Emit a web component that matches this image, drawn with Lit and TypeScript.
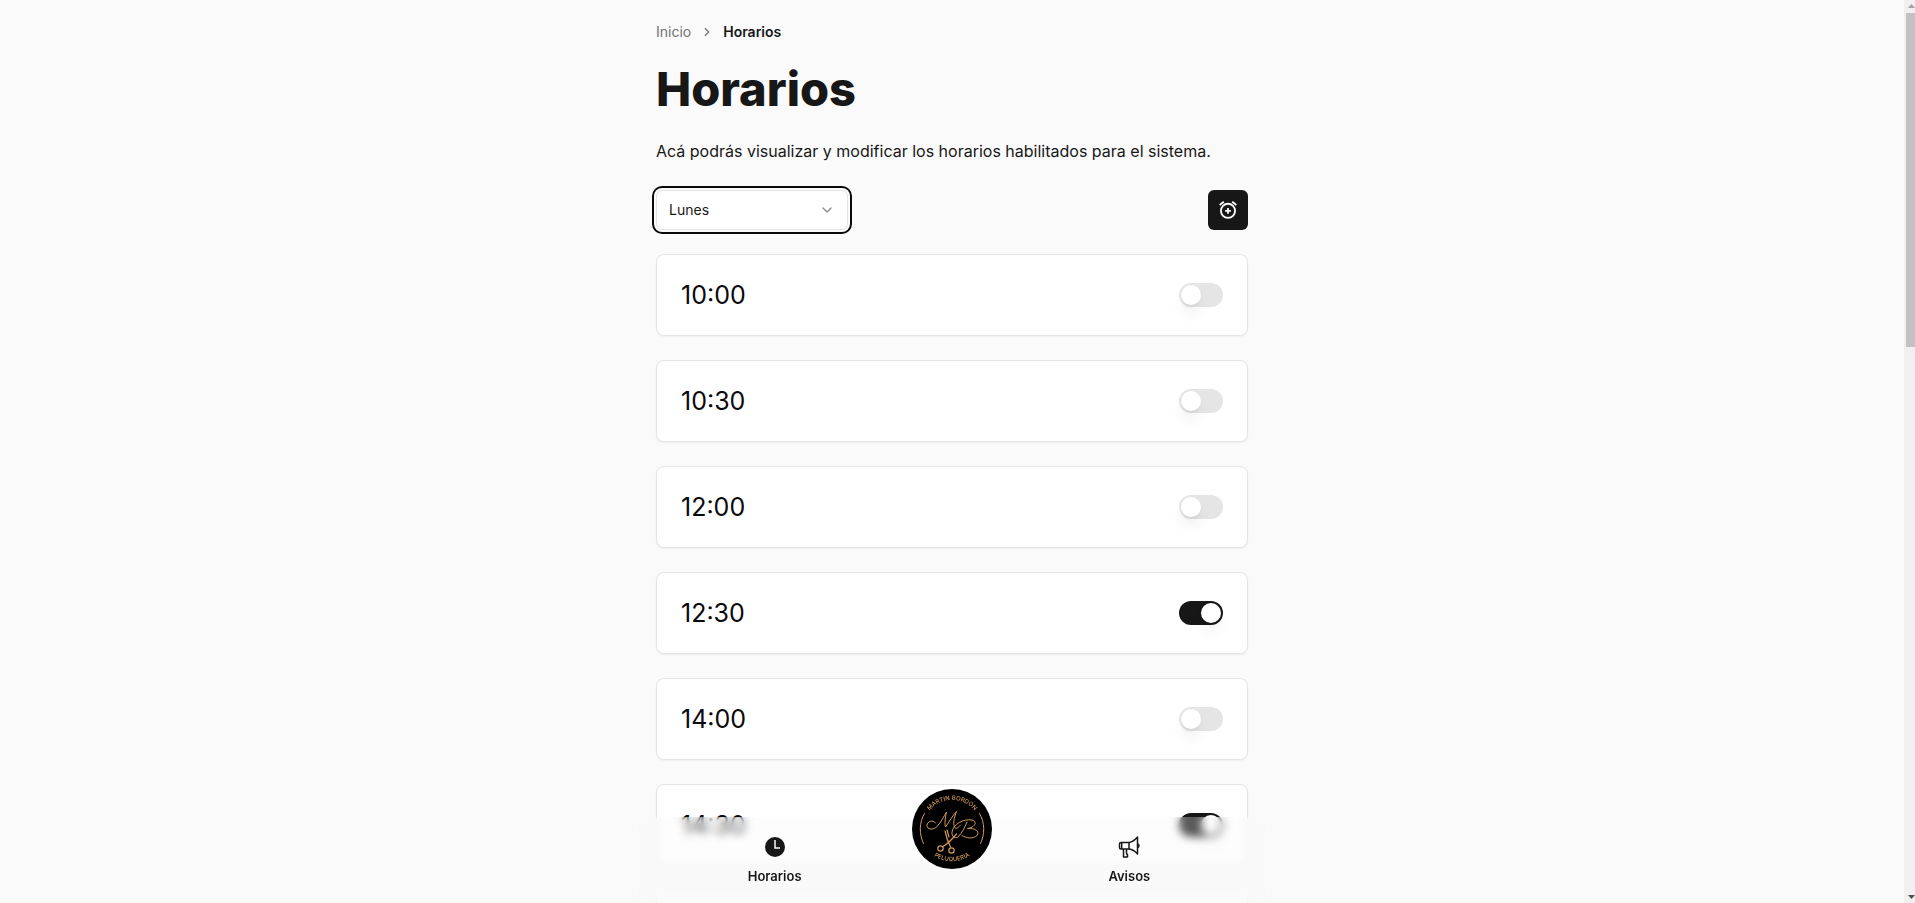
import { LitElement, html, css, svg } from "lit";
import { customElement, property, state } from "lit/decorators.js";

interface Slot {
  time: string;
  enabled: boolean;
}

const DAYS = ["Lunes", "Martes", "Miércoles", "Jueves", "Viernes", "Sábado"];

const SLOTS: Slot[] = [
  { time: "10:00", enabled: false },
  { time: "10:30", enabled: false },
  { time: "12:00", enabled: false },
  { time: "12:30", enabled: true },
  { time: "14:00", enabled: false },
  { time: "14:30", enabled: true },
  { time: "15:00", enabled: false },
];

@customElement("slot-card")
export class SlotCard extends LitElement {
  @property() time = "";
  @property({ type: Boolean }) enabled = false;

  static styles = css`
    :host {
      display: block;
    }
    .card {
      display: flex;
      align-items: center;
      justify-content: space-between;
      padding: 24px;
      background: #fff;
      border: 1px solid #e5e5e5;
      border-radius: 8px;
      box-shadow: 0 1px 2px rgba(0, 0, 0, 0.05);
    }
    .time {
      font-size: 25px;
      line-height: 32px;
      color: #0a0a0a;
    }
    .switch {
      appearance: none;
      box-sizing: border-box;
      display: flex;
      width: 44px;
      height: 24px;
      margin: 0;
      padding: 2px;
      border-radius: 12px;
      background: #e5e5e5;
      cursor: pointer;
    }
    .switch::before {
      content: "";
      width: 20px;
      height: 20px;
      border-radius: 50%;
      background: #fff;
      box-shadow: 0 10px 15px -3px rgba(0, 0, 0, 0.1),
        0 4px 6px -4px rgba(0, 0, 0, 0.1);
    }
    .switch:checked {
      background: #171717;
      justify-content: flex-end;
    }
  `;

  render() {
    return html`
      <div class="card">
        <label class="time" for="toggle">${this.time}</label>
        <input
          class="switch"
          id="toggle"
          type="checkbox"
          role="switch"
          .checked=${this.enabled}
        />
      </div>
    `;
  }
}

@customElement("brand-logo")
export class BrandLogo extends LitElement {
  static styles = css`
    :host {
      display: block;
    }
    .logo {
      display: block;
      width: 80px;
      height: 80px;
    }
    .ring {
      font: 500 6px Inter, sans-serif;
      fill: #d39a5c;
    }
  `;

  render() {
    return html`
      <svg class="logo" viewBox="0 0 80 80" role="img" aria-label="Martín Bordón Peluquería">
        ${svg`
          <defs>
            <path id="top" d="M13.6 27.8A29 29 0 0 1 66.4 27.8" />
            <path id="bottom" d="M14 59.5A33 33 0 0 0 66 59.5" />
          </defs>
          <circle cx="40" cy="40" r="40" fill="#000" />
          <text class="ring" text-anchor="middle"><textPath href="#top" startOffset="50%">MARTIN BORDON</textPath></text>
          <text class="ring" text-anchor="middle"><textPath href="#bottom" startOffset="50%">PELUQUERIA</textPath></text>
          <g fill="none" stroke="#d39a5c" stroke-linecap="round" stroke-linejoin="round">
            <path stroke-width="1" d="M12.500 24.500C7 33.500 7 45 11.500 54.500M67.500 24.500C73 33.500 73 45 68.500 54.500" />
            <path stroke-width="1" d="M23.500 34C21 30 15 32.500 15 36.500C15 40.500 21 41.500 25 37.500C29 33.500 32 27 34.500 23C33 30 32.500 35 33.500 38C37 33 41 26 44.500 22.500C42 29 41 34 42.500 38C43.500 40.500 46 39 48 36.500" />
            <path stroke-width="1" d="M55 33C53 38 50 44 46 48C43 50 39.500 47.500 40 43C41 35 52 29.500 60 31C66 32.500 63 38.500 55.500 39.500C63 39 68 42 65 46.500C61 50.500 54 49 50 46.500" />
            <path stroke-width="1.200" d="M33 42C34.500 49 37 55 38.500 58M44.500 45C40 50.500 35 55 31 57.500M35 41L37 48" />
            <circle cx="28.500" cy="59.500" r="2.700" stroke-width="1.200" />
            <circle cx="39.500" cy="61.500" r="2.700" stroke-width="1.200" />
          </g>
        `}
      </svg>
    `;
  }
}

@customElement("app-root")
export class AppRoot extends LitElement {
  @state() private slots = SLOTS;

  static styles = css`
    :host {
      display: grid;
      grid-template-columns: minmax(0, 1fr) 11px;
      height: 100vh;
      background: #fafafa;
      color: #171717;
      font-family: Inter, "Noto Sans", sans-serif;
    }
    .viewport {
      overflow-y: auto;
      scrollbar-width: none;
    }
    .page {
      box-sizing: border-box;
      max-width: 640px;
      margin: 0 auto;
      padding: 20px 24px 112px;
      display: flex;
      flex-direction: column;
    }
    .crumbs {
      display: flex;
      align-items: center;
      gap: 9px;
      font-size: 14px;
      line-height: 24px;
    }
    .crumbs a {
      color: #737373;
      text-decoration: none;
    }
    .crumbs svg {
      width: 14px;
      height: 14px;
      color: #737373;
    }
    .current {
      font-weight: 600;
    }
    h1 {
      margin: 20px 0 0;
      font-size: 47px;
      line-height: 50px;
      font-weight: 800;
    }
    .intro {
      margin: 24px 0 0;
      font-size: 16px;
      line-height: 26px;
    }
    .toolbar {
      display: flex;
      justify-content: space-between;
      margin: 26px 0 24px;
    }
    .picker {
      display: grid;
      width: 192px;
    }
    .picker select,
    .picker svg {
      grid-area: 1 / 1;
    }
    .picker select {
      appearance: none;
      box-sizing: border-box;
      height: 40px;
      padding: 0 12px;
      border: 1px solid #e5e5e5;
      border-radius: 6px;
      background: #fff;
      color: #171717;
      font: 14px/20px Inter, "Noto Sans", sans-serif;
      outline: none;
      box-shadow: 0 0 0 2px #fafafa, 0 0 0 4px #0a0a0a;
    }
    .picker svg {
      width: 16px;
      height: 16px;
      margin-right: 13px;
      place-self: center end;
      opacity: 0.5;
      pointer-events: none;
    }
    .add {
      display: grid;
      place-items: center;
      width: 40px;
      height: 40px;
      padding: 0;
      border: 0;
      border-radius: 6px;
      background: #171717;
      color: #fafafa;
      cursor: pointer;
    }
    .add svg {
      width: 20px;
      height: 20px;
    }
    .slots {
      display: grid;
      gap: 24px;
      margin: 0;
      padding: 0;
      list-style: none;
    }
    .dock {
      position: fixed;
      inset: auto 11px 0 0;
      box-sizing: border-box;
      max-width: 640px;
      height: 86px;
      margin: 0 auto;
      padding: 0 54px;
      display: grid;
      grid-template-columns: repeat(3, 1fr);
      grid-template-rows: 100%;
      justify-items: center;
      align-items: end;
      background: rgba(247, 247, 247, 0.3);
      backdrop-filter: blur(4px);
    }
    .tab {
      display: flex;
      flex-direction: column;
      align-items: center;
      gap: 8px;
      padding-bottom: 17px;
      color: #171717;
      font-size: 13px;
      line-height: 20px;
      font-weight: 600;
      text-decoration: none;
    }
    .tab svg {
      width: 22px;
      height: 22px;
    }
    .home {
      padding-bottom: 34px;
    }
    .scrollbar {
      display: flex;
      flex-direction: column;
      align-items: flex-end;
      background: #f0f0f0;
    }
    .scrollbar svg {
      width: 9px;
      height: 13px;
    }
    .thumb {
      width: 9px;
      height: 37%;
      background: #c1c1c1;
    }
    .down {
      margin-top: auto;
    }
  `;

  render() {
    return html`
      <div class="viewport">
        <main class="page">
          <nav class="crumbs" aria-label="Ruta">
            <a href="#inicio">Inicio</a>
            <svg viewBox="0 0 24 24" fill="none" stroke="currentColor" stroke-width="2" stroke-linecap="round" stroke-linejoin="round"><path d="m9 18 6-6-6-6" /></svg>
            <span class="current" aria-current="page">Horarios</span>
          </nav>
          <h1>Horarios</h1>
          <p class="intro">Acá podrás visualizar y modificar los horarios habilitados para el sistema.</p>
          <div class="toolbar">
            <div class="picker">
              <select aria-label="Día">
                ${DAYS.map((day) => html`<option>${day}</option>`)}
              </select>
              <svg viewBox="0 0 24 24" fill="none" stroke="currentColor" stroke-width="2" stroke-linecap="round" stroke-linejoin="round"><path d="m6 9 6 6 6-6" /></svg>
            </div>
            <button class="add" type="button" aria-label="Agregar horario">
              <svg viewBox="0 0 24 24" fill="none" stroke="currentColor" stroke-width="2.200">
                <circle cx="12" cy="13" r="8.500" />
                <path d="M7 2 2 6M17 2l5 4M12 9.500v7M8.500 13h7" />
              </svg>
            </button>
          </div>
          <ul class="slots">
            ${this.slots.map(
              (s) => html`<li><slot-card .time=${s.time} .enabled=${s.enabled}></slot-card></li>`
            )}
          </ul>
        </main>
      </div>
      <div class="scrollbar" aria-hidden="true">
        <svg viewBox="0 0 9 13"><path d="M2 8h7L5.500 4z" fill="#a3a3a3" /></svg>
        <div class="thumb"></div>
        <svg class="down" viewBox="0 0 9 13"><path d="M2 5h7L5.500 9z" fill="#505050" /></svg>
      </div>
      <nav class="dock" aria-label="Principal">
        <a class="tab" href="#horarios">
          <svg viewBox="0 0 22 22"><circle cx="11" cy="11" r="10" fill="currentColor" /><path d="M11 4v8h5" fill="none" stroke="#fafafa" stroke-width="1.500" /></svg>
          Horarios
        </a>
        <a class="home" href="#inicio"><brand-logo></brand-logo></a>
        <a class="tab" href="#avisos">
          <svg viewBox="0 0 22 22" fill="none" stroke="currentColor" stroke-width="1.500" stroke-linejoin="round">
            <path d="M11 6.500H3a1.500 1.500 0 0 0-1.500 1.500v3.500a1.500 1.500 0 0 0 1.500 1.500H11zM3.700 6.500v6.500" />
            <path d="M11 6.500c3-.5 6-2.500 8.500-5.500v17c-2.500-3-5.500-4.700-8.500-5" />
            <path d="M5.500 13v8h4v-2l-1-1.500V13M19.500 8c2 .3 2 3.200 0 3.500" />
          </svg>
          Avisos
        </a>
      </nav>
    `;
  }
}
